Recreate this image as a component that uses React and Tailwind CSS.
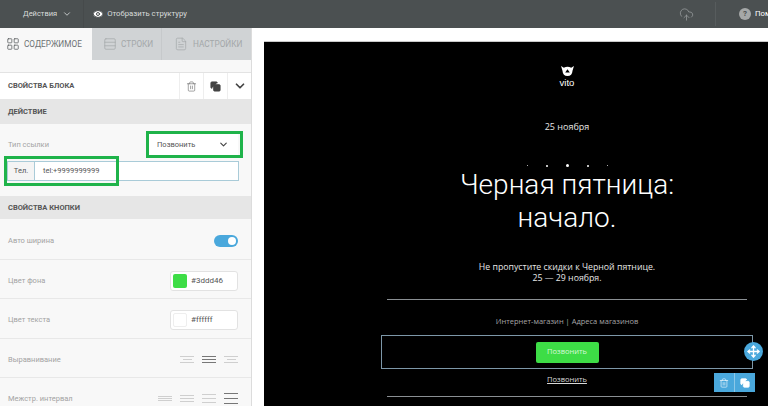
import React from "react";
import { ChevronDown, Eye, CloudUpload, Trash2, Copy, LayoutGrid, Rows3, FileText, Move } from "lucide-react";

const Row = ({ label, h = "h-[40px]", children }) => (
  <div className={`${h} flex items-center justify-between pl-2 pr-[13px] pt-[3px] border-b border-[#e8e8e8]`}>
    <span className="text-[7.5px] text-[#a3a3a3]">{label}</span>
    {children}
  </div>
);

const ColorField = ({ color, value, border }) => (
  <div className="w-[68px] h-[20px] bg-white border border-[#e2e2e2] rounded-[3px] flex items-center pl-[2px] gap-[4px]">
    <span className={`w-[14px] h-[14px] rounded-[2px] ${color} ${border}`} />
    <span className="text-[8px] text-[#555]">{value}</span>
  </div>
);

const Lines = ({ dark, gap = "gap-[2px]", widths = ["w-[14px]", "w-[14px]", "w-[14px]"] }) => (
  <div className={`flex flex-col ${gap} items-center`}>
    {widths.map((w, i) => (
      <span key={i} className={`${w} h-px ${dark ? "bg-[#777]" : "bg-[#cfcfcf]"}`} />
    ))}
  </div>
);

const SectionTitle = ({ children, h }) => (
  <div className={`${h} bg-[#e6e6e6] flex items-center pl-2 text-[7.5px] font-bold text-[#555]`}>{children}</div>
);

export default function App() {
  return (
    <div className="w-[768px] h-[406px] overflow-hidden flex flex-col bg-white font-['Roboto',sans-serif] relative">
      {/* Top bar */}
      <div className="h-[28px] shrink-0 bg-[#4b5051] flex items-center text-[7.75px] text-[#d9dcdc]">
        <span className="ml-[23px] text-[7.5px]">Действия</span>
        <ChevronDown size={10} className="ml-[5px]" />
        <span className="ml-[11px] w-px h-full bg-[#464a4b]" />
        <Eye size={12} fill="#fff" stroke="#4b5051" className="ml-[8px] text-white" />
        <span className="ml-[3px]">Отобразить структуру</span>
        <CloudUpload size={15} strokeWidth={1.2} className="ml-auto text-[#9a9e9f]" />
        <span className="ml-[21px] w-px h-[24px] bg-[#575c5d]" />
        <span className="ml-[23px] w-[12px] h-[12px] rounded-full bg-[#a5a8a8] flex items-center justify-center text-[8px] font-bold text-[#4b5051]">?</span>
        <span className="ml-[4px] w-[13px] overflow-hidden whitespace-nowrap text-white">Помощь</span>
      </div>

      <div className="flex-1 flex min-h-0">
        {/* Left panel */}
        <div className="w-[252px] shrink-0 bg-[#f8f8f8] border-r border-[#dcdcdc] flex flex-col">
          <div className="h-[32px] shrink-0 flex text-[8.25px]">
            <div className="w-[92px] flex items-center pl-[6px] gap-[4px] text-[#6d7173]">
              <LayoutGrid size={14} strokeWidth={1.3} className="text-[#55595b]" />
              СОДЕРЖИМОЕ
            </div>
            <div className="w-[70px] bg-[#d0d3d5] flex items-center pl-[11px] gap-[4px] text-[#a3a7a9] border-r border-[#c6c9cb]">
              <Rows3 size={14} strokeWidth={1.2} />
              СТРОКИ
            </div>
            <div className="flex-1 bg-[#d0d3d5] flex items-center pl-[12px] gap-[5px] text-[#a3a7a9]">
              <FileText size={14} strokeWidth={1.2} />
              НАСТРОЙКИ
            </div>
          </div>

          <div className="h-[13px] shrink-0 border-b border-[#e3e3e3]" />

          <div className="h-[26px] shrink-0 bg-white flex items-center text-[7.5px] font-bold text-[#555]">
            <span className="pl-2 flex-1">СВОЙСТВА БЛОКА</span>
            <span className="w-[24px] h-full border-l border-[#eee] flex items-center justify-center">
              <Trash2 size={11} strokeWidth={1.3} className="text-[#666]" />
            </span>
            <span className="w-[24px] h-full border-l border-[#eee] flex items-center justify-center">
              <Copy size={11} fill="#444" className="text-[#444]" />
            </span>
            <span className="w-[24px] h-full border-l border-[#eee] flex items-center justify-center">
              <ChevronDown size={14} strokeWidth={3} className="text-[#444]" />
            </span>
          </div>

          <SectionTitle h="h-[25px] shrink-0">ДЕЙСТВИЕ</SectionTitle>

          <div className="h-[37px] shrink-0 pl-2 pr-[13px] pt-[10px]">
            <div className="flex items-center justify-between h-[21px]">
              <span className="text-[7.5px] text-[#a3a3a3]">Тип ссылки</span>
              <div className="w-[89px] h-[21px] bg-white flex items-center justify-between pl-[8px] pr-[9px] text-[7.5px] text-[#555]">
                Позвонить
                <ChevronDown size={11} strokeWidth={2.5} className="text-[#444]" />
              </div>
            </div>
          </div>
          <div className="h-[35px] shrink-0 pl-[7px] pr-[12px]">
            <div className="h-[20px] flex bg-white border border-[#a9cbd8] text-[7.5px] text-[#555]">
              <span className="w-[27px] bg-[#f4f4f4] flex items-center justify-center border-r border-[#a9cbd8]">Тел.</span>
              <span className="flex items-center pl-[8px]">tel:+9999999999</span>
            </div>
          </div>

          <SectionTitle h="h-[23px] shrink-0">СВОЙСТВА КНОПКИ</SectionTitle>

          <Row label="Авто ширина" h="h-[41px] shrink-0">
            <span className="w-[24px] h-[12px] rounded-full bg-[#4aa8dc] flex items-center justify-end pr-[2px]">
              <span className="w-[8px] h-[8px] rounded-full bg-white" />
            </span>
          </Row>
          <Row label="Цвет фона" h="h-[39px] shrink-0">
            <ColorField color="bg-[#3ddd46]" value="#3ddd46" />
          </Row>
          <Row label="Цвет текста" h="h-[40px] shrink-0">
            <ColorField color="bg-white" border="border border-[#eee]" value="#ffffff" />
          </Row>
          <Row label="Выравнивание" h="h-[39px] shrink-0">
            <div className="flex gap-[8px]">
              <Lines widths={["w-[14px]", "w-[9px]", "w-[14px]"]} />
              <Lines dark />
              <Lines widths={["w-[14px]", "w-[9px]", "w-[14px]"]} />
            </div>
          </Row>
          <Row label="Межстр. интервал" h="h-[39px] shrink-0">
            <div className="flex gap-[8px] items-center">
              <Lines gap="gap-[1px]" />
              <Lines gap="gap-[2px]" />
              <Lines gap="gap-[3px]" />
              <Lines dark gap="gap-[4px]" />
            </div>
          </Row>
        </div>

        {/* Canvas */}
        <div className="flex-1 flex flex-col pl-[12px] min-w-0">
          <div className="h-[14px] shrink-0 border-b border-[#c9c9c9]" />
          <div className="flex-1 bg-black pl-[117px] pr-[15px] text-white">
            <div className="relative w-[372px] flex flex-col items-center">
              <svg width="15" height="12" viewBox="0 0 16 13" className="mt-[23px]">
                <path d="M1 1 L4 3 Q8 1 12 3 L15 1 L13.5 6 Q13 12 8 12 Q3 12 2.5 6 Z" fill="#fff" />
                <path d="M8 4.5 L10.5 8 L5.5 8 Z" fill="#000" />
              </svg>
              <span className="mt-[1px] text-[9.5px] leading-[10px] text-white font-['Liberation_Sans',sans-serif]">vito</span>
              <span className="mt-[33px] text-[9px] leading-[12px] text-[#e6e6e6] font-['Open_Sans',sans-serif]">25 ноября</span>
              <div className="mt-[31px] flex items-center gap-[18px]">
                <span className="w-px h-px bg-[#aaa]" />
                <span className="w-[2px] h-[2px] bg-white rounded-full" />
                <span className="w-[3px] h-[3px] bg-white rounded-full" />
                <span className="w-[2px] h-[2px] bg-white rounded-full" />
                <span className="w-px h-px bg-[#aaa]" />
              </div>
              <h1 className="mt-[1px] text-[28px] leading-[33px] font-light text-center text-white">
                Черная пятница:
                <br />
                начало.
              </h1>
              <p className="mt-[28px] text-[8.75px] leading-[10.5px] text-center text-[#e6e6e6] font-['Open_Sans',sans-serif]">
                Не пропустите скидки к Черной пятнице.
                <br />
                25 — 29 ноября.
              </p>
              <div className="mt-[16px] w-[360px] h-px bg-[#8a8f93]" />
              <span className="mt-[16px] text-[7.5px] leading-[10px] text-[#a5a5a5] font-['Open_Sans',sans-serif]">
                Интернет-магазин | Адреса магазинов
              </span>
              <div className="mt-[9px] w-[372px] h-[34px] border border-[#7d97a8] flex items-center justify-center">
                <span className="w-[63px] h-[21px] bg-[#3ddd46] rounded-[2px] flex items-center justify-center text-[7.5px] text-[#d8f7da] font-['Open_Sans',sans-serif]">
                  Позвонить
                </span>
              </div>
              <span className="mt-[5px] text-[7.5px] leading-[10px] text-[#d8d8d8] underline font-['Open_Sans',sans-serif]">Позвонить</span>
              <div className="mt-[12px] w-[360px] h-px bg-[#8a8f93]" />

              {/* Selected block controls */}
              <span className="absolute left-[363px] top-[300px] w-[19px] h-[19px] rounded-full bg-[#4aa8dc] flex items-center justify-center text-white">
                <Move size={13} strokeWidth={2.5} />
              </span>
              <div className="absolute left-[333px] top-[331px] w-[41px] h-[19px] flex bg-[#4aa8dc] text-white">
                <span className="flex-1 flex items-center justify-center border-r border-[#8cc8e8]">
                  <Trash2 size={10} strokeWidth={1.4} />
                </span>
                <span className="flex-1 flex items-center justify-center">
                  <Copy size={10} fill="#fff" />
                </span>
              </div>
            </div>
          </div>
        </div>
      </div>

      {/* Green annotation frames */}
      <div className="absolute left-[146px] top-[131px] w-[97px] h-[27px] border-[3px] border-[#1fb34a] pointer-events-none" />
      <div className="absolute left-[4px] top-[156px] w-[115px] h-[30px] border-[3px] border-[#1fb34a] pointer-events-none" />
    </div>
  );
}
